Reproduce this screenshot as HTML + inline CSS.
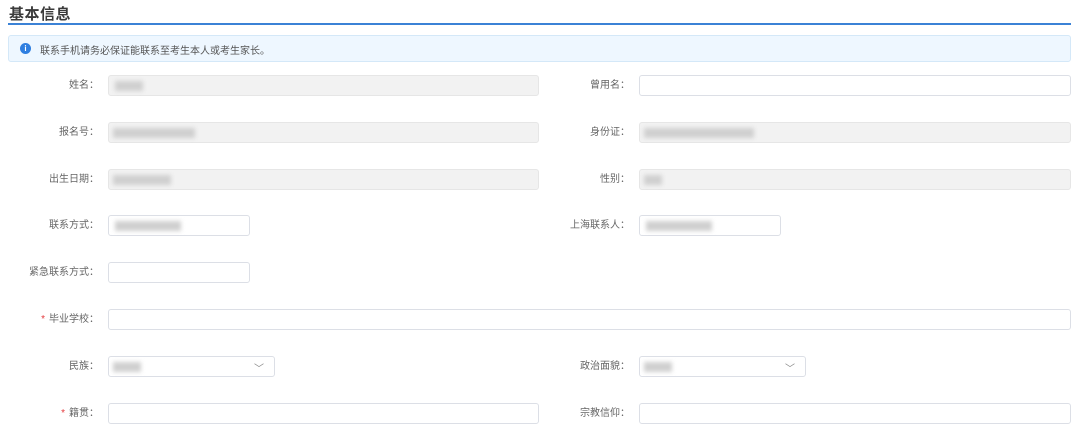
<!DOCTYPE html>
<html><head><meta charset="utf-8"><style>
*{margin:0;padding:0;box-sizing:border-box}
body{width:1080px;height:441px;background:#fff;font-family:"Liberation Sans","Noto Sans CJK SC",sans-serif;position:relative;overflow:hidden;color:#606266}
.t{position:absolute;left:9px;top:3px;font-size:15px;font-weight:bold;color:#3a3a3a;letter-spacing:0.5px}
.line{position:absolute;left:8px;top:23px;width:1063px;height:2px;background:#3b82d6}
.al{position:absolute;left:8px;top:35px;width:1063px;height:27px;background:#eef7ff;border:1px solid #d4e8f8;border-radius:3px}
.ic{position:absolute;left:11px;top:7px;width:11px;height:11px;border-radius:50%;background:#2f7fe0;color:#fff;font-size:8px;line-height:11px;text-align:center;font-weight:bold}
.at{position:absolute;left:31px;top:6px;font-size:10px;color:#555}
.l{position:absolute;font-size:10px;color:#666;text-align:right;width:120px;line-height:21px}
.s{color:#e4393c;margin-right:4px}
.i{position:absolute;height:21px;border:1px solid #dcdfe6;border-radius:3px;background:#fff}
.d{background:#f2f2f2;border-color:#e6e6e6}
.b{position:absolute;top:5px;height:10px;background:#d0d0d0;filter:blur(2px)}
.ar{position:absolute;right:10px;top:3px;font-size:10px;color:#888}
</style></head><body>
<div class="t">基本信息</div>
<div class="line"></div>
<div class="al"><div class="ic">i</div><div class="at">联系手机请务必保证能联系至考生本人或考生家长。</div></div>

<div class="l" style="left:-21px;top:75px">姓名：</div>
<div class="i d" style="left:108px;top:75px;width:431px"><div class="b" style="left:6px;width:28px"></div></div>
<div class="l" style="left:510px;top:75px">曾用名：</div>
<div class="i" style="left:639px;top:75px;width:432px"></div>

<div class="l" style="left:-21px;top:122px">报名号：</div>
<div class="i d" style="left:108px;top:122px;width:431px"><div class="b" style="left:4px;width:82px"></div></div>
<div class="l" style="left:510px;top:122px">身份证：</div>
<div class="i d" style="left:639px;top:122px;width:432px"><div class="b" style="left:4px;width:110px"></div></div>

<div class="l" style="left:-21px;top:169px">出生日期：</div>
<div class="i d" style="left:108px;top:169px;width:431px"><div class="b" style="left:4px;width:58px"></div></div>
<div class="l" style="left:510px;top:169px">性别：</div>
<div class="i d" style="left:639px;top:169px;width:432px"><div class="b" style="left:4px;width:18px"></div></div>

<div class="l" style="left:-21px;top:215px">联系方式：</div>
<div class="i" style="left:108px;top:215px;width:142px"><div class="b" style="left:6px;width:66px"></div></div>
<div class="l" style="left:510px;top:215px">上海联系人：</div>
<div class="i" style="left:639px;top:215px;width:142px"><div class="b" style="left:6px;width:66px"></div></div>

<div class="l" style="left:-21px;top:262px">紧急联系方式：</div>
<div class="i" style="left:108px;top:262px;width:142px"></div>

<div class="l" style="left:-21px;top:309px"><span class="s">*</span>毕业学校：</div>
<div class="i" style="left:108px;top:309px;width:963px"></div>

<div class="l" style="left:-21px;top:356px">民族：</div>
<div class="i" style="left:108px;top:356px;width:167px"><div class="b" style="left:4px;width:28px"></div><span class="ar">﹀</span></div>
<div class="l" style="left:510px;top:356px">政治面貌：</div>
<div class="i" style="left:639px;top:356px;width:167px"><div class="b" style="left:4px;width:28px"></div><span class="ar">﹀</span></div>

<div class="l" style="left:-21px;top:403px"><span class="s">*</span>籍贯：</div>
<div class="i" style="left:108px;top:403px;width:431px"></div>
<div class="l" style="left:510px;top:403px">宗教信仰：</div>
<div class="i" style="left:639px;top:403px;width:432px"></div>
</body></html>
